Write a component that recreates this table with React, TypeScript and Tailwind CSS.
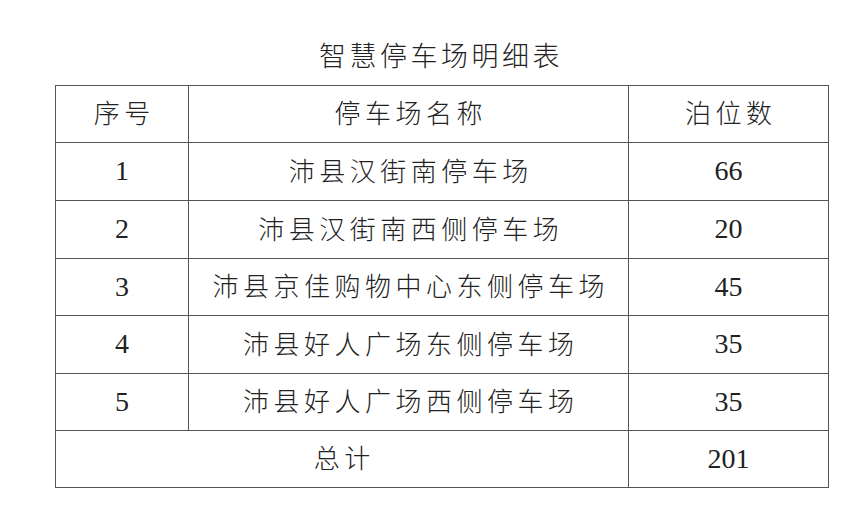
const rows = [
  { no: "1", name: "沛县汉街南停车场", count: "66", h: "h-[58px]" },
  { no: "2", name: "沛县汉街南西侧停车场", count: "20", h: "h-[58px]" },
  { no: "3", name: "沛县京佳购物中心东侧停车场", count: "45", h: "h-[57px]" },
  { no: "4", name: "沛县好人广场东侧停车场", count: "35", h: "h-[58px]" },
  { no: "5", name: "沛县好人广场西侧停车场", count: "35", h: "h-[57px]" },
];

const cjk = "font-['Noto_Sans_CJK_SC',sans-serif] font-light text-[26px] tracking-[4.5px] pl-[4.5px] leading-none";
const num = "font-['Liberation_Serif',serif] text-[28px] leading-none";
const cell = "border border-[#555] text-center align-middle p-0";

export default function App() {
  return (
    <div className="w-[862px] h-[518px] bg-white text-[#222] pt-[41px]">
      <h1 className="pl-[20px] text-center font-['Noto_Sans_CJK_SC',sans-serif] font-light text-[27px] leading-none tracking-[3.5px] h-[28px]">
        智慧停车场明细表
      </h1>
      <table className="ml-[55px] mt-[16px] w-[773px] border-collapse table-fixed">
        <colgroup>
          <col className="w-[133px]" />
          <col className="w-[440px]" />
          <col className="w-[200px]" />
        </colgroup>
        <tbody>
          <tr className="h-[57px]">
            <td className={cell}><span className={cjk}>序号</span></td>
            <td className={cell}><span className={cjk}>停车场名称</span></td>
            <td className={cell}><span className={cjk}>泊位数</span></td>
          </tr>
          {rows.map((r) => (
            <tr key={r.no} className={r.h}>
              <td className={cell}><span className={num}>{r.no}</span></td>
              <td className={cell}><span className={cjk}>{r.name}</span></td>
              <td className={cell}><span className={num}>{r.count}</span></td>
            </tr>
          ))}
          <tr className="h-[57px]">
            <td className={cell} colSpan={2}><span className={cjk}>总计</span></td>
            <td className={cell}><span className={num}>201</span></td>
          </tr>
        </tbody>
      </table>
    </div>
  );
}
